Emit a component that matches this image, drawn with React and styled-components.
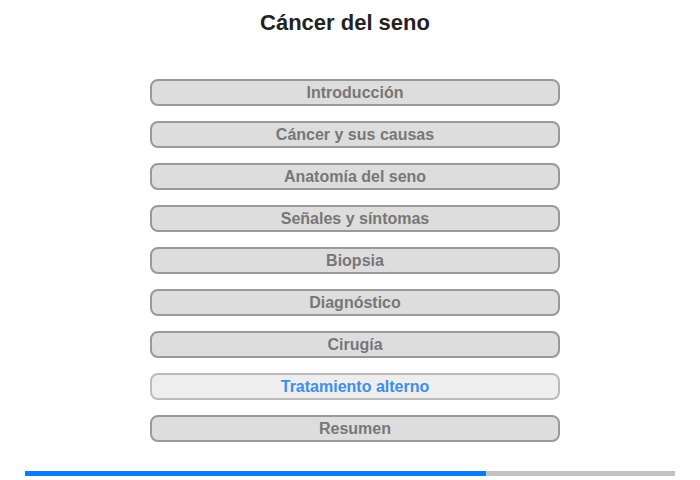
import styled, { createGlobalStyle } from "styled-components";

const GlobalStyle = createGlobalStyle`
  html, body {
    margin: 0;
    padding: 0;
    background: #ffffff;
    font-family: "Liberation Sans", Arial, sans-serif;
  }
`;

const Page = styled.div`
  width: 700px;
  height: 480px;
  display: flex;
  flex-direction: column;
  box-sizing: border-box;
  padding-top: 10px;
`;

const Title = styled.h1`
  margin: 0 10px 43px 0;
  font-size: 22px;
  line-height: 26px;
  font-weight: 700;
  color: #222222;
  text-align: center;
  flex-shrink: 0;
`;

const Menu = styled.nav`
  display: flex;
  flex-direction: column;
  gap: 15px;
  margin-left: 150px;
  width: 410px;
  flex-shrink: 0;
`;

const MenuButton = styled.button`
  height: 27px;
  box-sizing: border-box;
  border: 2px solid ${({ $active }) => ($active ? "#bbbbbb" : "#999999")};
  border-radius: 8px;
  background: ${({ $active }) => ($active ? "#eeeeee" : "#dddddd")};
  color: ${({ $active }) => ($active ? "#3d8fe8" : "#777777")};
  font-family: "Liberation Sans", Arial, sans-serif;
  font-size: 16px;
  font-weight: 700;
  padding: 0;
  text-align: center;
  cursor: pointer;
`;

const Progress = styled.div`
  margin: 29px 0 0 25px;
  width: 650px;
  height: 5px;
  flex-shrink: 0;
  background: #c3c3c3;
  display: flex;
`;

const ProgressFill = styled.div`
  height: 100%;
  background: #0a7cf8;
`;

const sections = [
  "Introducción",
  "Cáncer y sus causas",
  "Anatomía del seno",
  "Señales y síntomas",
  "Biopsia",
  "Diagnóstico",
  "Cirugía",
  "Tratamiento alterno",
  "Resumen",
];

export default function App() {
  const current = 7;
  const done = 461 / 650;

  return (
    <>
      <GlobalStyle />
      <Page>
        <Title>Cáncer del seno</Title>
        <Menu>
          {sections.map((name, index) => (
            <MenuButton key={name} $active={index === current}>
              {name}
            </MenuButton>
          ))}
        </Menu>
        <Progress>
          <ProgressFill style={{ width: `${done * 100}%` }} />
        </Progress>
      </Page>
    </>
  );
}
